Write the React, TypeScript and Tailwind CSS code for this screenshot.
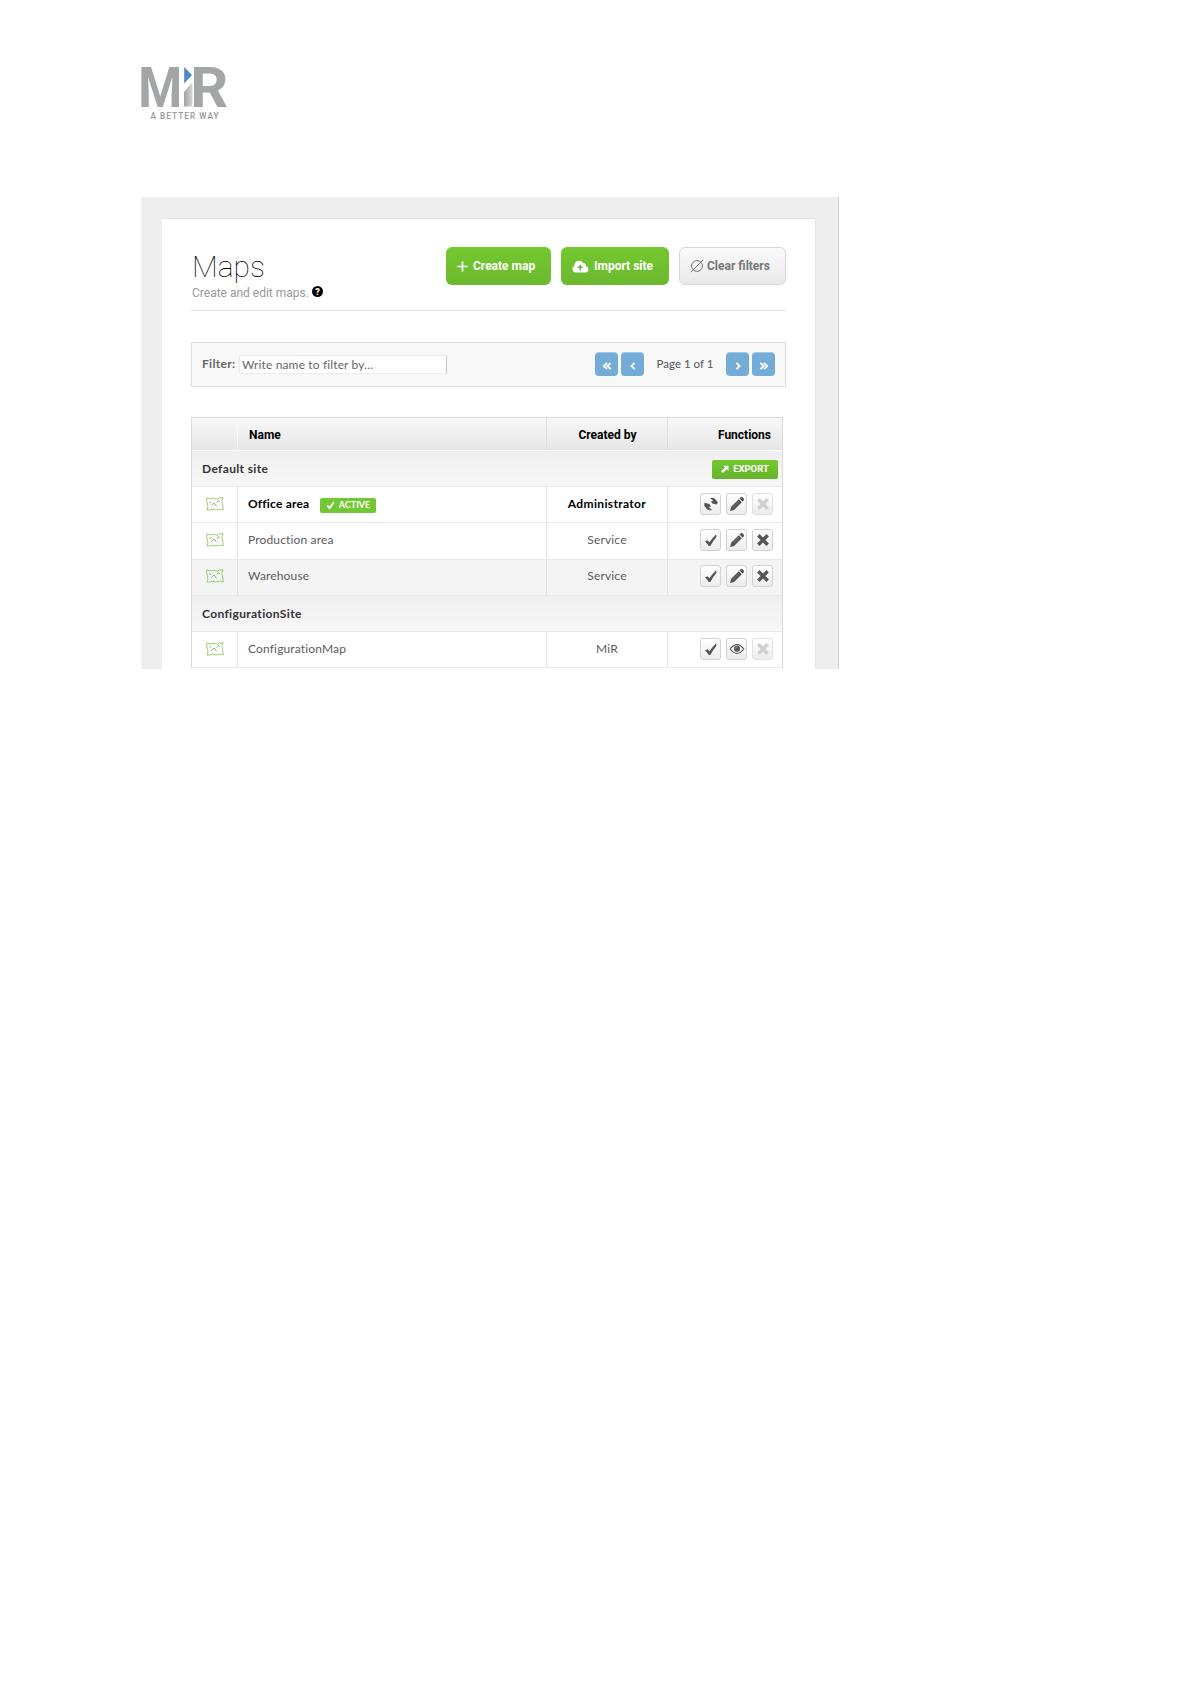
import type { ReactNode } from "react"

type IconName = "activate" | "refresh" | "edit" | "view" | "remove"

interface MapRow {
  name: string
  createdBy: string
  active?: boolean
  shaded?: boolean
  actions: IconName[]
  locked?: boolean
}

const DEFAULT_SITE: MapRow[] = [
  { name: "Office area", createdBy: "Administrator", active: true, actions: ["refresh", "edit", "remove"], locked: true },
  { name: "Production area", createdBy: "Service", actions: ["activate", "edit", "remove"] },
  { name: "Warehouse", createdBy: "Service", shaded: true, actions: ["activate", "edit", "remove"] },
]

const CONFIG_SITE: MapRow[] = [
  { name: "ConfigurationMap", createdBy: "MiR", actions: ["activate", "view", "remove"], locked: true },
]

const COLUMNS = "grid grid-cols-[46px_309px_121px_1fr]"

function Logo() {
  return (
    <svg width="90" height="56" viewBox="0 0 90 56" className="block overflow-visible" fontFamily="Roboto, sans-serif" fontWeight="700">
      <defs>
        <linearGradient id="stem" x1="0" x2="1" y1="0" y2="0">
          <stop offset="0" stopColor="#9fa1a3" />
          <stop offset="1" stopColor="#d6d7d8" />
        </linearGradient>
      </defs>
      <text x="-2.8" y="40.5" fontSize="55.5" fill="#a3a5a7" textLength="44" lengthAdjust="spacingAndGlyphs">M</text>
      <path d="M43 40.5V26L51.5 16V40.5Z" fill="url(#stem)" />
      <path d="M43.2 1L51 9L43.2 17.5Z" fill="#4f86c8" />
      <text x="49.3" y="40.5" fontSize="55.5" fill="#a3a5a7" textLength="38" lengthAdjust="spacingAndGlyphs">R</text>
      <text x="9.5" y="52.5" fontSize="8.2" fontWeight="600" fill="#9a9c9e" textLength="68">A BETTER WAY</text>
    </svg>
  )
}

function MapIcon() {
  return (
    <svg width="18" height="14" viewBox="0 0 18 14" fill="none" stroke="#8fc66b" strokeWidth="0.9" className="mb-0.5">
      <path d="M.8 .8Q3.4 2.6 5.6 1.6Q8 .8 10 2Q12.2 2.8 13.4 .9L17.2 .8Q15.2 3.6 16.2 6Q17.2 9 17.2 13Q14 11.6 12 12.6Q9.6 13.4 7 12.2Q4 13.4 .8 13Q2.6 10 1.5 7.5Q.4 4 .8 .8Z" />
      <path d="M3.6 4.4L5 6M5.4 8.6L8 6L9.5 8L10.6 9.4M10.6 5.4L12.5 3.6L13.4 5" stroke="#79a968" />
    </svg>
  )
}

function ActionIcon({ name }: { name: IconName }) {
  if (name === "activate") {
    return (
      <svg width="14" height="14" viewBox="0 0 14 14" fill="currentColor">
        <path d="M1 8.4L3.4 7.2L5.4 9.3Q8 5.2 12.2 1.2L12.4 4Q9.2 7.6 6.3 13H4.7Q3.2 10.3 1 8.4Z" />
      </svg>
    )
  }
  if (name === "refresh") {
    return (
      <svg width="14" height="14" viewBox="0 0 14 14" fill="currentColor">
        <path d="M5.8 1.3Q9.8 -.4 12.2 3.2L13.9 5.4L12.4 7.6L8.2 6.6L7 4.4L9.2 4Q8.2 2.4 5.8 1.3Z" />
        <path d="M8.2 12.7Q4.2 14.4 1.8 10.8L.1 8.6L.6 5.8L5.4 7L7 9.6L4.8 10Q5.8 11.6 8.2 12.7Z" />
      </svg>
    )
  }
  if (name === "edit") {
    return (
      <svg width="16" height="16" viewBox="0 0 16 16" fill="currentColor">
        <path d="M1.1 14.9L2.1 10.8L9.8 3.2L12.8 6.2L5.1 13.9Z" />
        <path d="M10.5 2.5L11.8 1.2Q12.7.5 13.6 1.3L14.7 2.4Q15.5 3.3 14.8 4.2L13.5 5.5Z" />
        <path d="M4.4 10.8L9.9 5.3" stroke="#999" strokeWidth=".5" />
      </svg>
    )
  }
  if (name === "view") {
    return (
      <svg width="16" height="14" viewBox="0 0 16 14" fill="none" stroke="currentColor" strokeWidth="1.1">
        <path d="M1.2 7Q8-1.8 14.8 7Q8 15.8 1.2 7Z" />
        <circle cx="8" cy="6.8" r="3" fill="currentColor" stroke="none" />
        <path d="M6.6 6.4Q6.7 5.2 8 5.1" stroke="#ddd" strokeWidth=".6" />
      </svg>
    )
  }
  return (
    <svg width="14" height="14" viewBox="0 0 14 14" stroke="currentColor" strokeWidth="3.4">
      <path d="M2.3 2.3L11.7 11.7M11.7 2.3L2.3 11.7" />
    </svg>
  )
}

function ActionButton({ name, disabled }: { name: IconName; disabled?: boolean }) {
  return (
    <button
      type="button"
      aria-label={name}
      disabled={disabled}
      className="flex h-[22px] w-[21px] items-center justify-center rounded-[3px] border border-[#d2d2d2] bg-linear-to-b from-white to-[#ececec] text-[#555] disabled:border-[#e2e2e2] disabled:text-[#cfcfcf]"
    >
      <ActionIcon name={name} />
    </button>
  )
}

function PageButton({ label, path }: { label: string; path: string }) {
  return (
    <button type="button" aria-label={label} className="flex h-6 w-[23px] items-center justify-center rounded-[4px] border-t border-[#a5c9e4] bg-[#74acd8] pt-0.5">
      <svg width="10" height="8" viewBox="0 0 12 10" fill="none" stroke="white" strokeWidth="2.3">
        <path d={path} />
      </svg>
    </button>
  )
}

function SiteRow({ name, children }: { name: string; children?: ReactNode }) {
  return (
    <div className="flex h-9 items-center justify-between border-b border-[#e9e9e9] bg-linear-to-b from-[#efefef] to-[#f7f7f7] pr-[4px] pl-2.5">
      <span className="pt-px text-[12px] font-bold tracking-[0.35px] text-[#333]">{name}</span>
      {children}
    </div>
  )
}

function Row({ map }: { map: MapRow }) {
  const tone = map.active ? "font-bold text-black tracking-[0.35px]" : "text-[#5c5c5c] tracking-[0.15px]"
  return (
    <div className={`${COLUMNS} h-[36.33px] border-b border-[#e9e9e9] text-[12px] ${map.shaded ? "bg-[#f4f4f4]" : "bg-white"} ${tone}`}>
      <div className="flex items-center justify-center border-r border-[#e4e4e4]">
        <MapIcon />
      </div>
      <div className="flex items-center border-r border-[#e4e4e4] pb-0.5 pl-2.5">
        <span className={map.active ? "w-[62px] tracking-[0.2px]" : ""}>{map.name}</span>
        {map.active ? (
          <span className="mt-[3px] ml-2.5 flex h-[15px] w-14 items-center justify-center gap-1 rounded-[2px] bg-[#73c634] text-[9px] font-bold tracking-normal text-white">
            <svg width="9" height="9" viewBox="0 0 14 14" fill="currentColor">
              <path d="M1 7.8L3.2 6.3L5.4 8.8Q8 4.2 12 1.2L12.8 3.4Q9.2 7.4 6.3 12.8H4.9Z" />
            </svg>
            ACTIVE
          </span>
        ) : null}
      </div>
      <div className="flex items-center justify-center border-r border-[#e4e4e4] pb-0.5">{map.createdBy}</div>
      <div className="flex items-center justify-end gap-[5px] pr-[9px] pb-0.5">
        {map.actions.map((name) => (
          <ActionButton key={name} name={name} disabled={map.locked && name === "remove"} />
        ))}
      </div>
    </div>
  )
}

export default function App() {
  return (
    <div className="min-h-[1684px] bg-white pt-[66px] pl-[141px] font-[Lato,sans-serif]">
      <Logo />
      <main className="mt-[75px] h-[472px] w-[698px] border-r border-[#d0d0d0] bg-[#eeeeee] pt-[21px] pl-[21px]">
        <div className="h-[451px] w-[654px] overflow-hidden border-t border-r border-[#e4e4e4] bg-white pt-[28px] pr-[29px] pl-[29px]">
          <header className="flex h-[64px] w-[595px] justify-between border-b border-[#e2e2e2] font-[Roboto,sans-serif]">
            <div>
              <h1 className="mt-px h-[37px] pl-px text-[30px] leading-[38px] font-[250] text-black">Maps</h1>
              <p className="flex items-center gap-[3px] pl-px text-[12px] leading-4 text-[#999]">
                Create and edit maps.
                <span className="mb-[3px] flex size-[11px] items-center justify-center rounded-full bg-black text-[9px] font-black text-white">?</span>
              </p>
            </div>
            <div className="flex h-[38px] gap-2.5 text-[12px] font-bold">
              <button type="button" className="flex w-[105px] items-center gap-[5px] rounded-[6px] bg-linear-to-b from-[#74c92e] to-[#6cb82f] pl-[11px] text-white">
                <svg width="11" height="11" viewBox="0 0 11 11" stroke="currentColor" strokeWidth="1.7">
                  <path d="M5.5 .5V10.5M.5 5.5H10.5" />
                </svg>
                Create map
              </button>
              <button type="button" className="flex w-[108px] items-center gap-[5px] rounded-[6px] bg-linear-to-b from-[#74c92e] to-[#6cb82f] pl-[11px] text-white">
                <svg width="17" height="13" viewBox="0 0 17 13" fill="currentColor">
                  <path d="M4 12.5A3.6 3.6 0 0 1 2.4 5.7A4.6 4.6 0 0 1 11 3.1A3.1 3.1 0 0 1 14 6.2A3.2 3.2 0 0 1 13.5 12.5Z" />
                  <path d="M8.2 10.8V6.5M6 8L8.2 5.8L10.4 8" fill="none" stroke="#60a72d" strokeWidth="1.2" />
                </svg>
                Import site
              </button>
              <button type="button" className="flex w-[107px] items-center gap-[3px] rounded-[6px] border border-[#d8d8d8] bg-linear-to-b from-[#fafafa] to-[#e9e9e9] pl-[10px] text-[#777]">
                <svg width="14" height="14" viewBox="0 0 14 14" fill="none" stroke="currentColor">
                  <circle cx="7" cy="7" r="5.4" />
                  <path d="M.8 13.2L13.2 .8" />
                </svg>
                Clear filters
              </button>
            </div>
          </header>

          <section className="mt-[31px] flex h-[45px] w-[595px] items-center border border-[#dcdcdc] bg-[#f8f8f8] pb-px pl-2.5">
            <label className="w-[34px] text-[12px] font-bold tracking-[0.3px] text-[#666]" htmlFor="filter">Filter:</label>
            <input
              id="filter"
              placeholder="Write name to filter by..."
              className="mt-px ml-[3px] h-[19px] w-[208px] border border-[#ececec] border-r-[#c8c8c8] bg-white pl-[2px] text-[12px] tracking-[0.14px] text-[#666] placeholder:text-[#666]"
            />
            <nav className="mr-[10px] ml-auto flex items-center gap-[3px]">
              <PageButton label="First" path="M6 1L2 5L6 9M10.5 1L6.5 5L10.5 9" />
              <PageButton label="Previous" path="M8 1L4 5L8 9" />
              <span className="w-[76px] text-center text-[11.5px] text-[#555]">Page 1 of 1</span>
              <PageButton label="Next" path="M4 1L8 5L4 9" />
              <PageButton label="Last" path="M1.5 1L5.5 5L1.5 9M6 1L10 5L6 9" />
            </nav>
          </section>

          <section className="mt-[30px] w-[592px] border border-b-0 border-[#dadada]">
            <div className={`${COLUMNS} h-[33px] border-b border-white bg-linear-to-b from-[#f8f8f8] to-[#e6e6e6] font-[Roboto,sans-serif] text-[12px] font-bold text-black`}>
              <div className="border-r border-[#f8f8f8]" />
              <div className="flex items-center border-r border-[#dedede] pt-0.5 pl-[11px]">Name</div>
              <div className="flex items-center justify-center border-r border-[#dedede] pt-0.5 pl-px">Created by</div>
              <div className="flex items-center justify-end pt-0.5 pr-[11px]">Functions</div>
            </div>
            <SiteRow name="Default site">
              <button type="button" className="mt-px flex h-[19px] w-[66px] items-center justify-center gap-1 rounded-[2px] bg-linear-to-b from-[#74c92e] to-[#66b32d] font-[Roboto,sans-serif] text-[9.5px] font-bold text-white">
                <svg width="8" height="8" viewBox="0 0 9 9" fill="currentColor">
                  <path d="M2.5 .8H8.4V6.6L6.5 4.7L2.2 9L.2 7L4.5 2.7Z" />
                </svg>
                EXPORT
              </button>
            </SiteRow>
            {DEFAULT_SITE.map((map) => (
              <Row key={map.name} map={map} />
            ))}
            <SiteRow name="ConfigurationSite" />
            {CONFIG_SITE.map((map) => (
              <Row key={map.name} map={map} />
            ))}
          </section>
        </div>
      </main>
    </div>
  )
}
